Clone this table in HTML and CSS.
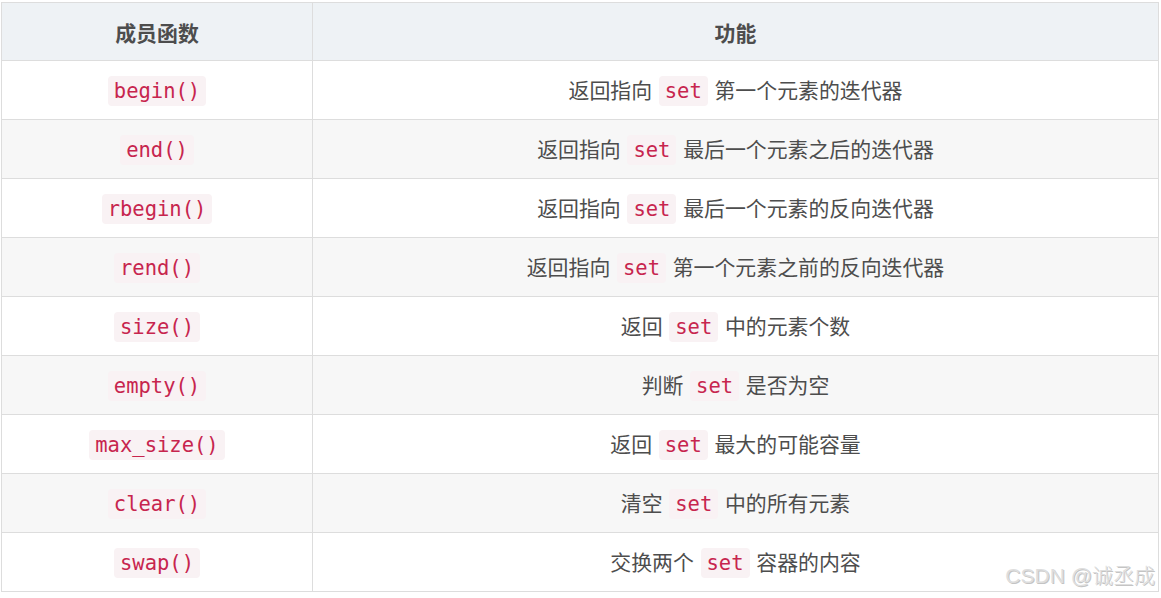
FILE: index.html
```html
<!DOCTYPE html>
<html lang="zh-CN">
<head>
<meta charset="utf-8">
<link rel="stylesheet" href="styles.css">
</head>
<body>
<div class="wrap">
<table class="tbl">
  <thead>
    <tr><th class="c1">成员函数</th><th>功能</th></tr>
  </thead>
  <tbody>
    <tr><td><code>begin()</code></td><td>返回指向 <code>set</code> 第一个元素的迭代器</td></tr>
    <tr><td><code>end()</code></td><td>返回指向 <code>set</code> 最后一个元素之后的迭代器</td></tr>
    <tr><td><code>rbegin()</code></td><td>返回指向 <code>set</code> 最后一个元素的反向迭代器</td></tr>
    <tr><td><code>rend()</code></td><td>返回指向 <code>set</code> 第一个元素之前的反向迭代器</td></tr>
    <tr><td><code>size()</code></td><td>返回 <code>set</code> 中的元素个数</td></tr>
    <tr><td><code>empty()</code></td><td>判断 <code>set</code> 是否为空</td></tr>
    <tr><td><code>max_size()</code></td><td>返回 <code>set</code> 最大的可能容量</td></tr>
    <tr><td><code>clear()</code></td><td>清空 <code>set</code> 中的所有元素</td></tr>
    <tr><td><code>swap()</code></td><td>交换两个 <code>set</code> 容器的内容</td></tr>
  </tbody>
</table>
<div class="mark">CSDN @诚丞成</div>
</div>
</body>
</html>
```
FILE: styles.css
```css
html, body {
  margin: 0;
  padding: 0;
  background: #ffffff;
}
.wrap {
  position: relative;
  padding: 2px 0 0 1px;
  width: 1158px;
}
.tbl {
  border-collapse: collapse;
  width: 1158px;
  table-layout: fixed;
  font-family: "Noto Sans CJK SC", "Noto Sans", sans-serif;
  font-size: 20.9px;
  color: #4d4d4d;
}
.tbl th, .tbl td {
  border: 1px solid #dddddd;
  text-align: center;
  vertical-align: middle;
  padding: 0 10px;
}
.tbl th {
  height: 57px;
  background: #eef2f5;
  font-weight: bold;
}
.tbl th.c1 {
  width: 290px;
}
.tbl td {
  height: 58px;
}
.tbl tbody tr:nth-child(even) td {
  background: #f7f7f7;
}
code {
  font-family: "DejaVu Sans Mono", "Liberation Mono", monospace;
  font-size: 20.5px;
  color: #c7254e;
  background: #f9f2f4;
  border-radius: 4px;
  padding: 2px 6px;
  line-height: 26px;
  display: inline-block;
  margin: 0 2px;
}
.mark {
  position: absolute;
  right: 4px;
  bottom: 4px;
  font-family: "Liberation Sans", "Noto Sans CJK SC", sans-serif;
  font-size: 21px;
  font-weight: 300;
  color: #dedede;
  text-shadow: 1px 1px 0 #c4c4c4;
  line-height: 24px;
}
```
